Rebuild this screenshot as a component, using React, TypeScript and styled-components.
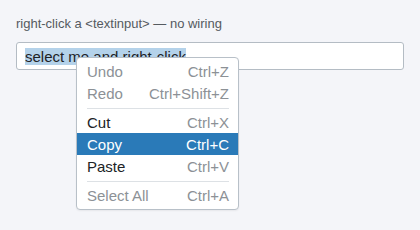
import React from "react";
import styled, { createGlobalStyle } from "styled-components";

const Global = createGlobalStyle`
  html, body { margin: 0; padding: 0; background: #f4f5f9; }
  body { font-family: "Liberation Sans", Arial, sans-serif; }
`;

const Page = styled.div`
  position: relative;
  width: 420px;
  height: 230px;
  box-sizing: border-box;
  padding: 16px 16px 0 16px;
  display: flex;
  flex-direction: column;
  gap: 10px;
`;

const Label = styled.div`
  font-size: 13px;
  line-height: 16px;
  color: #555a60;
`;

const Field = styled.div`
  box-sizing: border-box;
  height: 28px;
  background: #ffffff;
  border: 1px solid #b4bcc4;
  border-radius: 3px;
  padding: 0 8px;
  display: flex;
  align-items: center;
  font-size: 15px;
  color: #1e2226;
`;

const Selected = styled.span`
  background: #b4d2ea;
  line-height: 17px;
`;

const Menu = styled.div`
  position: absolute;
  left: 76px;
  top: 57px;
  width: 163px;
  box-sizing: border-box;
  background: #ffffff;
  border: 1px solid #b8c0c8;
  border-radius: 4px;
  padding: 2px 0 3px 0;
  display: flex;
  flex-direction: column;
  box-shadow: 0 1px 2px rgba(0, 0, 0, 0.06);
`;

const Item = styled.div<{ $disabled?: boolean; $active?: boolean }>`
  height: 22px;
  padding: 0 9px 0 10px;
  display: flex;
  align-items: center;
  justify-content: space-between;
  font-size: 15px;
  background: ${(p) => (p.$active ? "#2a7ab8" : "transparent")};
  color: ${(p) => (p.$active ? "#ffffff" : p.$disabled ? "#8c9196" : "#202326")};
`;

const Shortcut = styled.span<{ $active?: boolean }>`
  color: ${(p) => (p.$active ? "#ffffff" : "#8c9196")};
`;

const Separator = styled.div`
  height: 1px;
  margin: 4px 9px 2px 10px;
  background: #dde1e5;
`;

type Entry =
  | { sep: true }
  | { sep?: false; label: string; key: string; disabled?: boolean; active?: boolean };

const entries: Entry[] = [
  { label: "Undo", key: "Ctrl+Z", disabled: true },
  { label: "Redo", key: "Ctrl+Shift+Z", disabled: true },
  { sep: true },
  { label: "Cut", key: "Ctrl+X" },
  { label: "Copy", key: "Ctrl+C", active: true },
  { label: "Paste", key: "Ctrl+V" },
  { sep: true },
  { label: "Select All", key: "Ctrl+A", disabled: true },
];

export default function App() {
  return (
    <>
      <Global />
      <Page>
        <Label>right-click a &lt;textinput&gt; — no wiring</Label>
        <Field>
          <Selected>select me and right-click</Selected>
        </Field>
        <Menu>
          {entries.map((e, i) =>
            e.sep ? (
              <Separator key={i} />
            ) : (
              <Item key={i} $disabled={e.disabled} $active={e.active}>
                <span>{e.label}</span>
                <Shortcut $active={e.active}>{e.key}</Shortcut>
              </Item>
            )
          )}
        </Menu>
      </Page>
    </>
  );
}
